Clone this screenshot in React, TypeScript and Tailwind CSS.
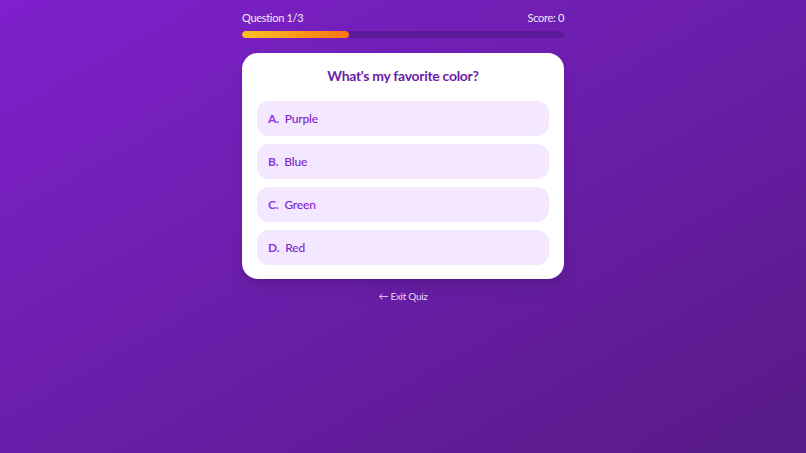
const options = [
  { letter: 'A', text: 'Purple' },
  { letter: 'B', text: 'Blue' },
  { letter: 'C', text: 'Green' },
  { letter: 'D', text: 'Red' },
];

export default function App() {
  const current = 1;
  const total = 3;
  const progress = (current / total) * 100;

  return (
    <div
      className="min-h-[453px] w-full bg-gradient-to-br from-[#7e20cd] to-[#571a86] flex justify-center"
      style={{ fontFamily: 'Lato, "Noto Sans", sans-serif' }}
    >
      <div className="w-[322px] pt-[8px] flex flex-col">
        <div className="flex justify-between text-[11px] leading-[20px] tracking-[-0.3px] text-white/90">
          <span>Question {current}/{total}</span>
          <span>Score: 0</span>
        </div>
        <div className="mt-[3px] h-[7px] rounded-full bg-[#5d1a98] overflow-hidden">
          <div
            className="h-full rounded-full bg-gradient-to-r from-[#fbbf24] to-[#f97316]"
            style={{ width: `${progress}%` }}
          />
        </div>

        <div className="mt-[15px] rounded-2xl bg-white px-[15px] pt-[12px] pb-[14px] shadow-lg">
          <h2 className="text-center text-[14px] leading-[22px] tracking-[-0.3px] font-bold text-[#6b21a8]">
            What's my favorite color?
          </h2>
          <div className="mt-[14px] flex flex-col gap-[8px]">
            {options.map((o) => (
              <button
                key={o.letter}
                className="flex h-[35px] items-center gap-[6px] rounded-xl bg-[#f3e8ff] px-[11px] text-left text-[12px] tracking-[-0.2px]"
              >
                <span className="font-bold text-[#9333ea]">{o.letter}.</span>
                <span className="font-medium text-[#7e22ce]">{o.text}</span>
              </button>
            ))}
          </div>
        </div>

        <button className="mt-[10px] self-center text-[10px] leading-[14px] tracking-[-0.3px] text-[#e9d5ff]">
          ← Exit Quiz
        </button>
      </div>
    </div>
  );
}
